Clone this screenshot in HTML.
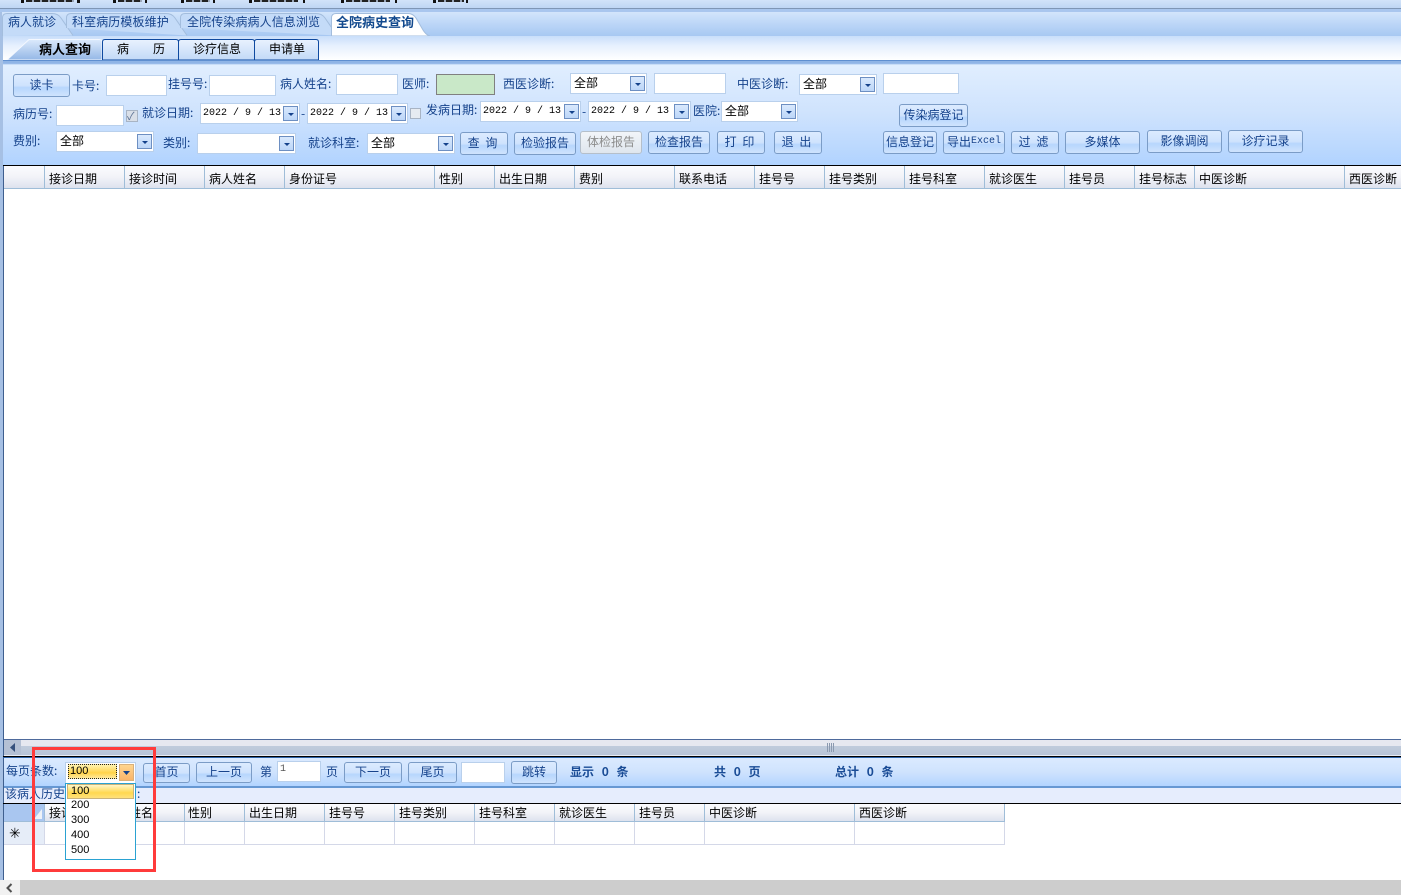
<!DOCTYPE html>
<html lang="zh"><head><meta charset="utf-8"><title>全院病史查询</title>
<style>
html,body{margin:0;padding:0;width:1401px;height:895px;overflow:hidden;background:#fff}
body{position:relative;font:12px/14px "WenQuanYi Zen Hei","Noto Sans CJK SC","Liberation Sans",sans-serif;color:#15428b}
div,span,svg{position:absolute;box-sizing:border-box}
.t{white-space:nowrap;color:#15428b;line-height:14px}
.k{color:#000}
.b{font-weight:bold}
.btn{border:1px solid #7b9cc6;border-radius:3px;background:linear-gradient(#dcebff 0,#cfe3fd 50%,#b7d6fd 60%,#cfe3fd 100%);color:#15428b;display:flex;align-items:center;justify-content:center;white-space:nowrap;line-height:14px;padding-bottom:2px}
.sp{word-spacing:3px;padding-right:3px}
.dis{color:#8c8c8c;border-color:#b5bfca;background:linear-gradient(#f2f5f9,#dfe6ee)}
.in{background:#fff;border:1px solid #b9d0ec}
.cb{background:#fff;border:1px solid #b9d0ec;color:#000;padding:2px 0 0 3px;white-space:nowrap;line-height:14px}
.ar{right:1px;top:2px;width:15px;height:15px;border:1px solid #6d8fc2;background:linear-gradient(#d9e9fd,#bcd6f8)}
.ar:after{content:"";position:absolute;left:4px;top:6px;border:3px solid transparent;border-top:3px solid #15428b;border-bottom:0}
.hd{background:linear-gradient(#fbfbfe,#f2f3f8 50%,#dde2ee);border-right:1px solid #9fbdd8;border-bottom:1px solid #9fbdd8;color:#000;padding:3px 0 0 4px;white-space:nowrap;line-height:14px}
.h1{top:166px;height:23px;padding-top:6px}
.cell{border-right:1px solid #d4d8e8;border-bottom:1px solid #d4d8e8;background:#fff}
.dt{font-family:"Liberation Mono",monospace;font-size:10px;white-space:pre;padding-top:3px;padding-left:2px}
.bk{top:0;width:3px;height:3px;background:#111}
.ds{top:0;height:2px;background:repeating-linear-gradient(90deg,#222 0 6px,#9aa6b8 6px 8px)}
.st{color:#1a4c96;word-spacing:5px;font-weight:bold}
</style></head><body>

<!-- top strip -->
<div style="left:0;top:0;width:1401px;height:9px;background:linear-gradient(#d2e3f9,#bcd4f3)"></div>
<div class="bk" style="left:21px"></div><div class="ds" style="left:26px;width:48px"></div><div class="bk" style="left:77px"></div>
<div class="bk" style="left:113px"></div><div class="ds" style="left:118px;width:24px"></div><div class="bk" style="left:145px;width:2px"></div>
<div class="bk" style="left:181px"></div><div class="ds" style="left:186px;width:24px"></div><div class="bk" style="left:213px;width:2px"></div>
<div class="bk" style="left:249px"></div><div class="ds" style="left:254px;width:44px"></div><div class="bk" style="left:303px;width:2px"></div>
<div class="bk" style="left:341px"></div><div class="ds" style="left:346px;width:44px"></div><div class="bk" style="left:395px;width:2px"></div>
<div class="bk" style="left:433px"></div><div class="ds" style="left:438px;width:26px"></div><div class="bk" style="left:466px;width:2px"></div>
<div style="left:0;top:8px;width:1401px;height:1px;background:#7f96b5"></div>
<div style="left:0;top:9px;width:1401px;height:3px;background:#a9c6ee"></div>

<!-- left frame -->
<div style="left:0;top:12px;width:3px;height:868px;background:#a6c0e4"></div>
<div style="left:3px;top:60px;width:1px;height:820px;background:#3f5f8f"></div>

<!-- top tab bar -->
<div style="left:2px;top:12px;width:1399px;height:24px;background:linear-gradient(#d3e5fb,#bcd6f7 50%,#a7c8f2)"></div>
<svg style="left:0;top:12px" width="440" height="24" viewBox="0 0 440 24">
<path d="M2.500 24V6Q2.500 1.500 7 1.500H52Q58 1.500 61 6L73 23.500" fill="#c4dbf8" stroke="#a3bddd"/>
<path d="M66.500 16V6Q66.500 1.500 71 1.500H166Q172 1.500 175 6L187 23.500" fill="#c4dbf8" stroke="#a3bddd"/>
<path d="M180.500 16V6Q180.500 1.500 185 1.500H316Q322 1.500 325 6L337 23.500" fill="#c4dbf8" stroke="#a3bddd"/>
<path d="M331.500 24V6Q331.500 1.500 336 1.500H408Q413 1.500 416 6L423 18Q426 23 430 24Z" fill="#fff" stroke="#a3bddd"/>
</svg>
<div class="t" style="left:8px;top:15px">病人就诊</div>
<div class="t" style="left:72px;top:15px;letter-spacing:.1px">科室病历模板维护</div>
<div class="t" style="left:187px;top:15px;letter-spacing:.1px">全院传染病病人信息浏览</div>
<div class="t b" style="left:336px;top:15px;color:#134a8e;font-size:13px">全院病史查询</div>

<!-- sub tab bar -->
<div style="left:3px;top:36px;width:1398px;height:24px;background:linear-gradient(#c9defa,#e6f0fe 40%,#ffffff)"></div>
<svg style="left:0;top:36px" width="330" height="24" viewBox="0 0 330 24">
<defs><linearGradient id="g1" x1="0" y1="0" x2="0" y2="1"><stop offset="0" stop-color="#dceafc"/><stop offset="1" stop-color="#94b7e6"/></linearGradient><linearGradient id="g2" x1="0" y1="0" x2="0" y2="1"><stop offset="0" stop-color="#e9f2fe"/><stop offset="1" stop-color="#c2d9f7"/></linearGradient></defs>
<path d="M7 24L29 3.500H99Q102 3.500 102 6V24Z" fill="url(#g1)" stroke="#f4f8ff"/>
<path d="M102.500 24V6Q102.500 3.500 105 3.500H176Q178.500 3.500 178.500 6V24Z" fill="url(#g2)" stroke="#0f4aa0"/>
<path d="M178.500 24V6Q178.500 3.500 181 3.500H252Q254.500 3.500 254.500 6V24Z" fill="url(#g2)" stroke="#0f4aa0"/>
<path d="M254.500 24V6Q254.500 3.500 257 3.500H316Q318.500 3.500 318.500 6V24Z" fill="url(#g2)" stroke="#0f4aa0"/>
</svg>
<div class="t k b" style="left:39px;top:42px;font-size:13px">病人查询</div>
<div class="t k" style="left:117px;top:42px">病</div><div class="t k" style="left:153px;top:42px">历</div>
<div class="t k" style="left:193px;top:42px">诊疗信息</div>
<div class="t k" style="left:269px;top:42px">申请单</div>

<!-- panel -->
<div style="left:3px;top:60px;width:1398px;height:105px;background:linear-gradient(#e2efff,#cfe3fd 50%,#b1d3ff);border-top:1px solid #6c9ddc"></div>
<div style="left:3px;top:60px;width:1398px;height:5px;background:linear-gradient(#8fb4e6,#8fb4e6 60%,#e2efff);border-top:1px solid #5f8fd0"></div>

<!-- row 1 -->
<div class="btn" style="left:13px;top:74px;width:57px;height:23px">读卡</div>
<div class="t" style="left:72px;top:79px">卡号:</div>
<div class="in" style="left:106px;top:75px;width:61px;height:21px"></div>
<div class="t" style="left:168px;top:77px">挂号号:</div>
<div class="in" style="left:209px;top:75px;width:67px;height:21px"></div>
<div class="t" style="left:280px;top:77px">病人姓名:</div>
<div class="in" style="left:336px;top:74px;width:62px;height:21px"></div>
<div class="t" style="left:402px;top:77px">医师:</div>
<div style="left:436px;top:74px;width:59px;height:21px;background:#c9e8c8;border:1px solid #808080"></div>
<div class="t" style="left:503px;top:77px">西医诊断:</div>
<div class="cb" style="left:570px;top:73px;width:77px;height:21px">全部<span class="ar"></span></div>
<div class="in" style="left:654px;top:73px;width:72px;height:21px"></div>
<div class="t" style="left:737px;top:77px">中医诊断:</div>
<div class="cb" style="left:799px;top:74px;width:78px;height:21px">全部<span class="ar"></span></div>
<div class="in" style="left:883px;top:73px;width:76px;height:21px"></div>

<!-- row 2 -->
<div class="t" style="left:13px;top:107px">病历号:</div>
<div class="in" style="left:56px;top:105px;width:68px;height:21px"></div>
<div style="left:126px;top:110px;width:12px;height:12px;background:#d9dfe8;border:1px solid #a8b4c4"></div>
<div class="t" style="left:127px;top:109px;font-size:11px;color:#5d7396">✓</div>
<div class="t" style="left:142px;top:106px">就诊日期:</div>
<div class="cb dt" style="left:200px;top:103px;width:100px;height:21px">2022 / 9 / 13<span class="ar"></span></div>
<div class="t" style="left:301px;top:107px">-</div>
<div class="cb dt" style="left:307px;top:103px;width:101px;height:21px">2022 / 9 / 13<span class="ar"></span></div>
<div style="left:410px;top:108px;width:11px;height:11px;background:#e6ebf1;border:1px solid #a8b4c4"></div>
<div class="t" style="left:426px;top:103px">发病日期:</div>
<div class="cb dt" style="left:480px;top:101px;width:101px;height:21px">2022 / 9 / 13<span class="ar"></span></div>
<div class="t" style="left:582px;top:105px">-</div>
<div class="cb dt" style="left:588px;top:101px;width:103px;height:21px">2022 / 9 / 13<span class="ar"></span></div>
<div class="t" style="left:693px;top:104px">医院:</div>
<div class="cb" style="left:721px;top:101px;width:77px;height:21px">全部<span class="ar"></span></div>
<div class="btn" style="left:899px;top:104px;width:69px;height:23px">传染病登记</div>

<!-- row 3 -->
<div class="t" style="left:13px;top:134px">费别:</div>
<div class="cb" style="left:56px;top:131px;width:98px;height:21px">全部<span class="ar"></span></div>
<div class="t" style="left:163px;top:136px">类别:</div>
<div class="cb" style="left:197px;top:133px;width:99px;height:21px"><span class="ar"></span></div>
<div class="t" style="left:308px;top:136px">就诊科室:</div>
<div class="cb" style="left:367px;top:133px;width:88px;height:21px">全部<span class="ar"></span></div>
<div class="btn sp" style="left:460px;top:132px;width:48px;height:23px">查 询</div>
<div class="btn" style="left:514px;top:132px;width:62px;height:23px">检验报告</div>
<div class="btn dis" style="left:580px;top:131px;width:62px;height:23px">体检报告</div>
<div class="btn" style="left:648px;top:131px;width:62px;height:23px">检查报告</div>
<div class="btn sp" style="left:717px;top:131px;width:48px;height:23px">打 印</div>
<div class="btn sp" style="left:774px;top:131px;width:48px;height:23px">退 出</div>
<div class="btn" style="left:883px;top:131px;width:54px;height:23px">信息登记</div>
<div class="btn" style="left:943px;top:131px;width:62px;height:23px">导出<span style="position:static;font:10px 'Liberation Mono',monospace">Excel</span></div>
<div class="btn sp" style="left:1011px;top:131px;width:48px;height:23px">过 滤</div>
<div class="btn" style="left:1065px;top:131px;width:75px;height:23px">多媒体</div>
<div class="btn" style="left:1147px;top:130px;width:75px;height:23px">影像调阅</div>
<div class="btn" style="left:1228px;top:130px;width:75px;height:23px">诊疗记录</div>

<!-- main grid -->
<div style="left:3px;top:165px;width:1398px;height:1px;background:#000"></div>
<div class="hd h1" style="left:4px;width:41px"></div>
<div class="hd h1" style="left:45px;width:80px">接诊日期</div>
<div class="hd h1" style="left:125px;width:80px">接诊时间</div>
<div class="hd h1" style="left:205px;width:80px">病人姓名</div>
<div class="hd h1" style="left:285px;width:150px">身份证号</div>
<div class="hd h1" style="left:435px;width:60px">性别</div>
<div class="hd h1" style="left:495px;width:80px">出生日期</div>
<div class="hd h1" style="left:575px;width:100px">费别</div>
<div class="hd h1" style="left:675px;width:80px">联系电话</div>
<div class="hd h1" style="left:755px;width:70px">挂号号</div>
<div class="hd h1" style="left:825px;width:80px">挂号类别</div>
<div class="hd h1" style="left:905px;width:80px">挂号科室</div>
<div class="hd h1" style="left:985px;width:80px">就诊医生</div>
<div class="hd h1" style="left:1065px;width:70px">挂号员</div>
<div class="hd h1" style="left:1135px;width:60px">挂号标志</div>
<div class="hd h1" style="left:1195px;width:150px">中医诊断</div>
<div class="hd h1" style="left:1345px;width:56px;border-right:0">西医诊断</div>

<!-- h scrollbar -->
<div style="left:4px;top:739px;width:1397px;height:1px;background:#4e6a9c"></div>
<div style="left:4px;top:740px;width:1397px;height:6px;background:#e6e8f0"></div>
<div style="left:4px;top:746px;width:1397px;height:9px;background:linear-gradient(#c0ccdc,#b8c4d8)"></div>
<div style="left:4px;top:740px;width:17px;height:15px;background:#b4c0d4"></div>
<svg style="left:9px;top:743px" width="8" height="10"><path d="M6 0V9L1 4.500Z" fill="#35507c"/></svg>
<div style="left:827px;top:743px;width:7px;height:9px;background:repeating-linear-gradient(90deg,#8b9ab0 0 1px,transparent 1px 2px)"></div>
<div style="left:4px;top:755px;width:1397px;height:1px;background:#e8ecf4"></div>
<div style="left:3px;top:756px;width:1398px;height:1px;background:#000"></div>
<div style="left:3px;top:757px;width:1398px;height:1px;background:#2d62a8"></div>

<!-- pager -->
<div style="left:4px;top:758px;width:1397px;height:28px;background:linear-gradient(#dbeaff,#cfe3fd 50%,#b2d4ff)"></div>
<div style="left:4px;top:786px;width:1397px;height:2px;background:#6698d3"></div>
<div class="t" style="left:6px;top:764px">每页条数:</div>
<div style="left:65px;top:762px;width:71px;height:22px;background:#fff;border:1px solid #b9d0ec"></div>
<div style="left:68px;top:764px;width:49px;height:15px;background:linear-gradient(#fff3b0,#ffd34a 60%,#ffe89a);border:1px dotted #222;color:#000;font:11px/13px 'Liberation Sans',sans-serif;padding-left:1px">100</div>
<div style="left:119px;top:764px;width:15px;height:17px;background:linear-gradient(#ffd58f,#f9b46a);border:1px solid #d9b07a"></div>
<svg style="left:123px;top:771px" width="8" height="5"><path d="M0 0H7L3.500 4Z" fill="#15428b"/></svg>
<div class="btn" style="left:143px;top:763px;width:47px;height:20px">首页</div>
<div class="btn" style="left:196px;top:762px;width:56px;height:21px">上一页</div>
<div class="t" style="left:260px;top:765px">第</div>
<div class="in" style="left:277px;top:761px;width:44px;height:21px;color:#555;font:10px/14px 'Liberation Mono',monospace;padding:1px 0 0 2px">1</div>
<div class="t" style="left:326px;top:765px">页</div>
<div class="btn" style="left:344px;top:762px;width:58px;height:21px">下一页</div>
<div class="btn" style="left:408px;top:762px;width:49px;height:21px">尾页</div>
<div class="in" style="left:461px;top:762px;width:44px;height:21px"></div>
<div class="btn" style="left:511px;top:761px;width:46px;height:23px">跳转</div>
<div class="t st" style="left:570px;top:765px">显示 0 条</div>
<div class="t st" style="left:714px;top:765px">共 0 页</div>
<div class="t st" style="left:835px;top:765px">总计 0 条</div>

<!-- history label -->
<div style="left:4px;top:788px;width:1397px;height:15px;background:#e6edfd"></div>
<div class="t" style="left:5px;top:787px">该病人历史</div>
<div class="t" style="left:137px;top:787px">:</div>
<div style="left:3px;top:803px;width:1398px;height:1px;background:#000"></div>

<!-- lower grid -->
<div style="left:4px;top:804px;width:41px;height:18px;background:#a9c6f0;border-right:1px solid #9fbdd8;border-bottom:1px solid #9fbdd8"></div>
<svg style="left:34px;top:809px" width="9" height="11"><path d="M8 0V10H0Z" fill="#eef2f8"/></svg>
<div class="hd" style="left:45px;top:804px;width:56px;height:18px;padding-top:2px">接诊日期</div>
<div class="hd" style="left:101px;top:804px;width:84px;height:18px;padding-top:2px">病人姓名</div>
<div class="hd" style="left:185px;top:804px;width:60px;height:18px;padding-top:2px;padding-left:3px">性别</div>
<div class="hd" style="left:245px;top:804px;width:80px;height:18px;padding-top:2px">出生日期</div>
<div class="hd" style="left:325px;top:804px;width:70px;height:18px;padding-top:2px">挂号号</div>
<div class="hd" style="left:395px;top:804px;width:80px;height:18px;padding-top:2px">挂号类别</div>
<div class="hd" style="left:475px;top:804px;width:80px;height:18px;padding-top:2px">挂号科室</div>
<div class="hd" style="left:555px;top:804px;width:80px;height:18px;padding-top:2px">就诊医生</div>
<div class="hd" style="left:635px;top:804px;width:70px;height:18px;padding-top:2px">挂号员</div>
<div class="hd" style="left:705px;top:804px;width:150px;height:18px;padding-top:2px">中医诊断</div>
<div class="hd" style="left:855px;top:804px;width:150px;height:18px;padding-top:2px">西医诊断</div>
<div class="cell" style="left:4px;top:822px;width:41px;height:23px;background:#e6edf8;color:#000;font-size:14px;line-height:22px;padding-left:5px">✳</div>
<div class="cell" style="left:45px;top:822px;width:80px;height:23px"></div>
<div class="cell" style="left:125px;top:822px;width:60px;height:23px"></div>
<div class="cell" style="left:185px;top:822px;width:60px;height:23px"></div>
<div class="cell" style="left:245px;top:822px;width:80px;height:23px"></div>
<div class="cell" style="left:325px;top:822px;width:70px;height:23px"></div>
<div class="cell" style="left:395px;top:822px;width:80px;height:23px"></div>
<div class="cell" style="left:475px;top:822px;width:80px;height:23px"></div>
<div class="cell" style="left:555px;top:822px;width:80px;height:23px"></div>
<div class="cell" style="left:635px;top:822px;width:70px;height:23px"></div>
<div class="cell" style="left:705px;top:822px;width:150px;height:23px"></div>
<div class="cell" style="left:855px;top:822px;width:150px;height:23px"></div>

<!-- dropdown -->
<div style="left:65px;top:783px;width:71px;height:77px;background:#fff;border:1px solid #2aa2d2"></div>
<div style="left:67px;top:784px;width:67px;height:15px;background:linear-gradient(#fff6c8,#ffd84f 60%,#ffe17a);border:1px solid #c9b37a"></div>
<div style="left:71px;top:784px;color:#000;font:11px/15px 'Liberation Sans',sans-serif">100</div>
<div style="left:71px;top:798px;color:#000;font:11px/15px 'Liberation Sans',sans-serif">200</div>
<div style="left:71px;top:813px;color:#000;font:11px/15px 'Liberation Sans',sans-serif">300</div>
<div style="left:71px;top:828px;color:#000;font:11px/15px 'Liberation Sans',sans-serif">400</div>
<div style="left:71px;top:843px;color:#000;font:11px/15px 'Liberation Sans',sans-serif">500</div>

<!-- red annotation -->
<div style="left:32px;top:747px;width:124px;height:125px;border:3px solid #ff3b3b"></div>

<!-- browser scrollbar -->
<div style="left:0;top:880px;width:1401px;height:15px;background:#cdcdcd"></div>
<div style="left:0;top:880px;width:20px;height:15px;background:#f1f1f1"></div>
<svg style="left:5px;top:883px" width="9" height="10"><path d="M6.500 1L2.500 5L6.500 9" fill="none" stroke="#505050" stroke-width="2"/></svg>
</body></html>
